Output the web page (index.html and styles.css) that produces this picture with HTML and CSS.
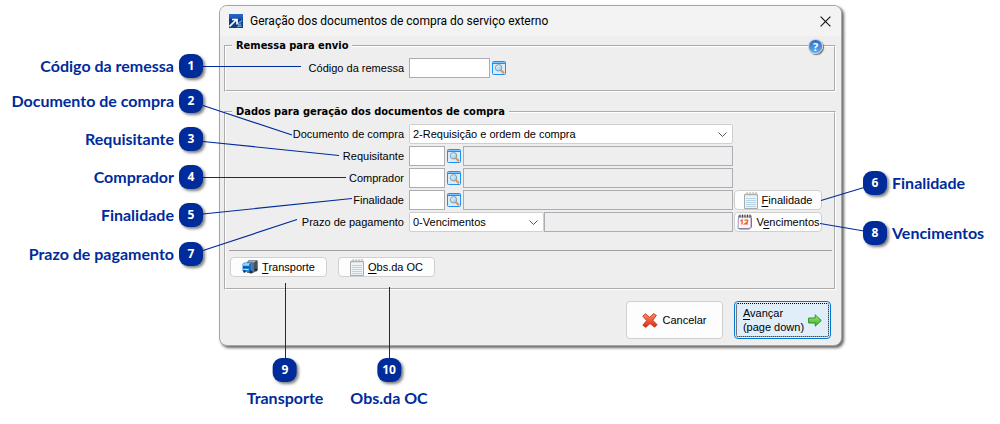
FILE: index.html
```html
<!DOCTYPE html>
<html lang="pt-BR">
<head>
<meta charset="utf-8">
<title>Geração dos documentos de compra do serviço externo</title>
<link rel="stylesheet" href="styles.css">
</head>
<body>
<svg class="sprite" aria-hidden="true">
  <defs>
    <linearGradient id="glass" x1="0" y1="0" x2="1" y2="1"><stop offset="0" stop-color="#f4fdff"/><stop offset="1" stop-color="#7cc8e8"/></linearGradient>
    <linearGradient id="red" x1="0" y1="0" x2="0" y2="1"><stop offset="0" stop-color="#ff8a68"/><stop offset="1" stop-color="#e02a10"/></linearGradient>
    <linearGradient id="green" x1="0" y1="0" x2="0" y2="1"><stop offset="0" stop-color="#a4ee7c"/><stop offset="1" stop-color="#2fae22"/></linearGradient>
    <linearGradient id="sky" x1="0" y1="0" x2="0" y2="1"><stop offset="0" stop-color="#2a68c8"/><stop offset=".3" stop-color="#1d55b4"/><stop offset=".4" stop-color="#0a3a84"/><stop offset="1" stop-color="#0c3f8c"/></linearGradient>
  </defs>
  <symbol id="search" viewBox="0 0 14 14">
    <rect x=".5" y=".5" width="13" height="13" rx="1" fill="#dcebfa" stroke="#1e90f5"/>
    <path d="M1 1.5h12" stroke="#7cc4ff"/><path d="M1 2.5h12" stroke="#1e90f5"/>
    <path d="M9 9.2l3 3" stroke="#f09040" stroke-width="2.2"/>
    <circle cx="6.6" cy="6.8" r="3.2" fill="url(#glass)" stroke="#8499a8"/>
  </symbol>
  <symbol id="notepad" viewBox="0 0 14 17">
    <path d="M.5 2.5h13v14H.5z" fill="#edf3f6" stroke="#a3acad"/>
    <path d="M2 6.5h10M2 8.5h10M2 10.500h10M2 12.500h10M2 14.500h10" stroke="#b9d3e2"/>
    <path d="M2 3.500V1l1.500-.500v3M5 3.500V1l1.500-.500v3M8 3.500V1l1.500-.500v3M11 3.500V1l1.500-.500v3" fill="none" stroke="#b4b8b4" stroke-width=".8"/>
  </symbol>
  <symbol id="calendar" viewBox="0 0 16 16">
    <path d="M1.500 2h12.500v10.500l-2 2H1z" fill="#f8f5fd" stroke="#9a95b8"/>
    <path d="M1.500 1.500h13v2H1.500z" fill="#8b868f"/>
    <path d="M3 .5v3M5.500 .5v3M8 .5v3M10.500 .5v3M13 .5v3" stroke="#4a4448"/><path d="M4.200 1v2M6.700 1v2M9.200 1v2M11.700 1v2" stroke="#d9d5dd" stroke-width=".8"/>
    <path d="M3.500 7l1.500-1v4.500M7.500 6.200h3v1.700l-2.700 2h3.200" fill="none" stroke="#f4600c" stroke-width="1.300"/>
    <path d="M14.500 4v9l-2 2H2" fill="none" stroke="#77728e"/>
  </symbol>
  <symbol id="truck" viewBox="0 0 16 14">
    <path d="M5 2l2-2h7.500l1 1v9L11 13H5z" fill="#656c74"/><path d="M6 2l1.500-1.500h7L12 2.500z" fill="#a6b0b9"/><path d="M12 2.500l3.500-2V10L12 12z" fill="#4b5157"/>
    <path d="M.5 4l2-1.500h6.500L10.500 4v7.500L8 12.500.500 11z" fill="#2187e2"/><path d="M1 4.500l1.500-1.200h5.500l-1 2.500-6-.300z" fill="#9bd7ff"/><path d="M1 6.500h6v1.500H1z" fill="#124f94"/><path d="M1.500 9.500h5" stroke="#b5e0ff"/><path d="M8 4v8" stroke="#0d539f"/>
    <circle cx="9" cy="12" r="1.600" fill="#252a30"/><circle cx="14" cy="10" r="1.400" fill="#252a30"/><circle cx="2.500" cy="11.500" r="1.200" fill="#252a30"/>
  </symbol>
  <symbol id="cancel" viewBox="0 0 16 15">
    <path d="M3.500.7L7.600 4.400 11.600.6l2.800 1.800-3.600 4.800 4.300 4.500-2.400 2.500-4.700-3.600-4.200 3.800L.8 12.200 4.700 7.500.8 3.200z" fill="url(#red)" stroke="#b92b13" stroke-width=".8" stroke-linejoin="round"/>
  </symbol>
  <symbol id="next" viewBox="0 0 14 13">
    <path d="M.6 4h6.600V.8L13.300 6.500l-6.100 5.700V9H.6z" fill="url(#green)" stroke="#278a1d" stroke-width=".9" stroke-linejoin="round"/>
  </symbol>
</svg>

<main class="figure">
  <section class="dialog" role="dialog" aria-labelledby="dialog-title">
    <header class="titlebar">
      <svg class="app-icon" viewBox="0 0 14 14" aria-hidden="true">
        <path d="M0 0h14v14H0z" fill="url(#sky)"/>
        <path d="M.5 12.500l6.500-6.500M3 5.500h5v5" fill="none" stroke="#fff" stroke-width="1.700"/>
        <path d="M9 9l4-2M9.500 11l3-1M8 13l5-1M11 7v6M9.500 9v4M12.700 5.500v2" stroke="#86aee0" stroke-width=".8"/>
      </svg>
      <h1 class="title" id="dialog-title">Geração dos documentos de compra do serviço externo</h1>
      <button class="close" type="button" aria-label="Fechar">
        <svg viewBox="0 0 11 11" width="11" height="11"><path d="M.6.6l9.800 9.800M10.400.6L.6 10.400" stroke="#1b1b1b" stroke-width="1.200"/></svg>
      </button>
    </header>

    <form class="content">
      <fieldset class="group">
        <legend>Remessa para envio</legend>
        <button class="help" type="button" aria-label="Ajuda"><span>?</span></button>
        <div class="row">
          <label for="remessa">Código da remessa</label>
          <input class="box box-code" id="remessa" type="text">
          <button class="lookup" type="button" aria-label="Pesquisar remessa"><svg><use href="#search"/></svg></button>
        </div>
      </fieldset>

      <fieldset class="group">
        <legend>Dados para geração dos documentos de compra</legend>
        <div class="rows">
          <div class="row">
            <label for="documento">Documento de compra</label>
            <select class="combo" id="documento"><option>2-Requisição e ordem de compra</option></select>
            <span class="side"></span>
          </div>
          <div class="row">
            <label for="requisitante">Requisitante</label>
            <input class="box box-short" id="requisitante" type="text">
            <button class="lookup" type="button" aria-label="Pesquisar requisitante"><svg><use href="#search"/></svg></button>
            <input class="box box-name" type="text" aria-label="Nome do requisitante" readonly>
            <span class="side"></span>
          </div>
          <div class="row">
            <label for="comprador">Comprador</label>
            <input class="box box-short" id="comprador" type="text">
            <button class="lookup" type="button" aria-label="Pesquisar comprador"><svg><use href="#search"/></svg></button>
            <input class="box box-name" type="text" aria-label="Nome do comprador" readonly>
            <span class="side"></span>
          </div>
          <div class="row">
            <label for="finalidade">Finalidade</label>
            <input class="box box-short" id="finalidade" type="text">
            <button class="lookup" type="button" aria-label="Pesquisar finalidade"><svg><use href="#search"/></svg></button>
            <input class="box box-name" type="text" aria-label="Descrição da finalidade" readonly>
            <button class="btn side" type="button"><svg class="i-note"><use href="#notepad"/></svg><span><u>F</u>inalidade</span></button>
          </div>
          <div class="row">
            <label for="prazo">Prazo de pagamento</label>
            <select class="combo combo-short" id="prazo"><option>0-Vencimentos</option></select>
            <input class="box box-name" type="text" aria-label="Descrição do prazo" readonly>
            <button class="btn side" type="button"><svg class="i-cal"><use href="#calendar"/></svg><span>V<u>e</u>ncimentos</span></button>
          </div>
        </div>
        <hr class="rule">
        <div class="tools">
          <button class="btn" type="button"><svg class="i-truck"><use href="#truck"/></svg><span><u>T</u>ransporte</span></button>
          <button class="btn" type="button"><svg class="i-note"><use href="#notepad"/></svg><span><u>O</u>bs.da OC</span></button>
        </div>
      </fieldset>

      <footer class="actions">
        <button class="btn btn-big" type="button"><svg class="i-cancel"><use href="#cancel"/></svg><span>Cancelar</span></button>
        <button class="btn btn-big btn-default" type="button"><span><u>A</u>vançar<br>(page down)</span><svg class="i-next"><use href="#next"/></svg></button>
      </footer>
    </form>
  </section>

  <svg class="leaders leaders-left" viewBox="0 0 440 370" aria-hidden="true">
    <path d="M203 66.500H301M203 177.500H346M285.500 283V358M389.500 287V358"/>
    <path class="slant" d="M203 105.500L292 135M203 141.500L339 155.500M203 214L352 198.500M203 250.500L297 219.500"/>
  </svg>
  <svg class="leaders leaders-right" viewBox="0 0 180 370" aria-hidden="true">
    <path class="slant" d="M1 200.500L44 187.500M0 223.500L44 231"/>
  </svg>

  <div class="callout at-1"><span>Código da remessa</span><b>1</b></div>
  <div class="callout at-2"><span>Documento de compra</span><b>2</b></div>
  <div class="callout at-3"><span>Requisitante</span><b>3</b></div>
  <div class="callout at-4"><span>Comprador</span><b>4</b></div>
  <div class="callout at-5"><span>Finalidade</span><b>5</b></div>
  <div class="callout at-7"><span>Prazo de pagamento</span><b>7</b></div>
  <div class="callout right at-6"><b>6</b><span>Finalidade</span></div>
  <div class="callout right at-8"><b>8</b><span>Vencimentos</span></div>
  <div class="callout below at-9"><b>9</b><span>Transporte</span></div>
  <div class="callout below at-10"><b>10</b><span>Obs.da OC</span></div>
</main>
</body>
</html>
```
FILE: styles.css
```css
* { box-sizing: border-box; }

body {
  margin: 0;
  background: #fff;
  color: #000;
  font: 11px/14px "Liberation Sans", sans-serif;
}

button, input, select { font: inherit; color: inherit; margin: 0; }
button { cursor: pointer; }
u { text-underline-offset: 2px; }
.sprite { position: absolute; width: 0; height: 0; }

.figure {
  position: relative;
  min-width: 900px;
  padding: 5px 158px 78px 219px;
}

/* Dialog window */
.dialog {
  background: #eee;
  border: 1px solid #a6a6a6;
  border-radius: 8px;
  box-shadow: 2px 2px 3px rgba(0, 0, 0, .6);
  overflow: hidden;
}
.titlebar {
  display: flex;
  align-items: center;
  height: 30px;
  padding: 0 10px 0 9px;
  background: #f3f3f3;
}
.app-icon { width: 14px; height: 14px; }
.title {
  flex: 1;
  margin: 0 0 0 7px;
  font: 12px/16px Roboto, "Open Sans", sans-serif;
}
.close {
  display: flex;
  padding: 0;
  border: 0;
  background: none;
}
.content { padding: 2px 5px 6px 4px; }

/* Groups */
.group {
  position: relative;
  min-width: 0;
  margin: 0;
  padding: 4px 12px 12px 0;
  border: 2px groove #fff;
}
.group + .group { margin-top: 12px; padding-bottom: 11px; }
.group legend {
  margin-left: 6px;
  padding: 0 4px;
  font: bold 11px/16px "DejaVu Sans Condensed", "Open Sans", sans-serif;
}
.help {
  position: absolute;
  top: -15px;
  right: 11px;
  width: 15px;
  height: 15px;
  padding: 0;
  border: 1px solid #c9cdd2;
  border-radius: 50%;
  background: linear-gradient(#2a6cc4, #5cb0f5);
  box-shadow: 1px 1px 1px #666;
  color: #fff;
  font: bold 11px/12px "Open Sans", sans-serif;
}
.rows { display: grid; gap: 2px; }
.row { display: flex; align-items: center; height: 20px; }
.row label { flex: none; width: 183px; padding-right: 5px; text-align: right; }
.side { flex: none; width: 88px; margin-left: 1px; }

.box {
  height: 20px;
  padding: 0 3px;
  border: 1px solid #abadb3;
  border-radius: 0;
  background: #fff;
}
.box-code { width: 81px; }
.box-short { width: 36px; }
.box-name { flex: 1; min-width: 0; }
.box:read-only { background: #eee; }
.lookup {
  display: flex;
  flex: none;
  margin: 0 2px;
  padding: 0;
  border: 0;
  background: none;
}
.lookup svg { width: 14px; height: 14px; }
.combo {
  flex: 1;
  height: 20px;
  padding: 0 20px 0 3px;
  border: 1px solid #cfcfcf;
  border-radius: 2px;
  appearance: none;
  background: #fff url("data:image/svg+xml,%3Csvg xmlns='http://www.w3.org/2000/svg' width='9' height='5'%3E%3Cpath d='M.5.5l4 4 4-4' fill='none' stroke='%23555'/%3E%3C/svg%3E") no-repeat right 5px center;
}
.combo-short { flex: none; width: 135px; }

/* Buttons */
.btn {
  display: flex;
  align-items: center;
  justify-content: center;
  gap: 4px;
  height: 20px;
  padding: 0;
  border: 1px solid #d0d0d0;
  border-radius: 4px;
  background: #fdfdfd;
  white-space: nowrap;
}
.i-note { width: 14px; height: 17px; }
.i-cal { width: 16px; height: 16px; }
.i-truck { width: 16px; height: 14px; }
.i-cancel { width: 16px; height: 15px; }
.i-next { width: 14px; height: 13px; }

.rule { height: 1px; margin: 18px -10px 6px 3px; border: 0; background: #a0a0a0; }
.tools { display: flex; gap: 11px; padding-left: 4px; }
.tools .btn { width: 97px; }
.actions {
  display: flex;
  justify-content: flex-end;
  gap: 11px;
  padding: 11px 5px 0 0;
}
.btn-big { width: 97px; height: 38px; text-align: left; }
.btn-default {
  border-color: #0078d7;
  background: #e0eef9;
  outline: 1px dotted #000;
  outline-offset: -3px;
}

/* Numbered callouts around the dialog */
.leaders { position: absolute; top: 0; height: 370px; fill: none; stroke: #002b9b; pointer-events: none; }
.leaders-left { left: 0; width: 440px; }
.leaders-right { right: 0; width: 180px; }
.slant { stroke-width: 1.2; }

.callout {
  position: absolute;
  display: flex;
  align-items: center;
  gap: 5px;
  color: #002b9b;
  font: bold 16px/24px Lato, "Open Sans", sans-serif;
  white-space: nowrap;
}
.callout b {
  width: 24px;
  height: 24px;
  border-radius: 9px;
  background: #002b9b;
  box-shadow: 2px 2px 3px rgba(0, 0, 0, .5);
  color: #fff;
  font: bold 12px/24px "Open Sans", sans-serif;
  text-align: center;
}
.at-1, .at-2, .at-3, .at-4, .at-5, .at-7 { right: calc(100% - 203px); }
.at-1 { top: 54px; }
.at-2 { top: 89px; }
.at-3 { top: 127px; }
.at-4 { top: 165px; }
.at-5 { top: 203px; }
.at-7 { top: 242px; }
.right { left: calc(100% - 137px); }
.at-6 { top: 171px; }
.at-8 { top: 221px; }
.below { top: 358px; flex-direction: column; gap: 4px; transform: translateX(-50%); }
.at-9 { left: 285px; }
.at-10 { left: 389px; }
```
